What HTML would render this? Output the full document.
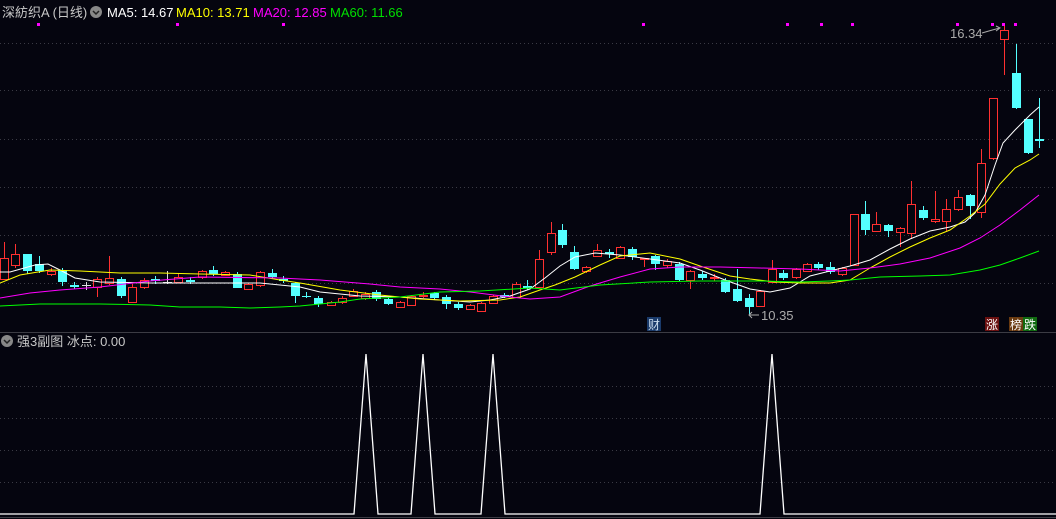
<!DOCTYPE html>
<html><head><meta charset="utf-8"><style>
body{margin:0;background:#05050f;width:1056px;height:519px;overflow:hidden;font-family:"Liberation Sans","Noto Sans CJK SC",sans-serif}
svg{position:absolute;left:0;top:0}
</style></head><body>
<svg id="s" width="1056" height="519" xmlns="http://www.w3.org/2000/svg">
<rect width="1056" height="519" fill="#05050f"/>
<g stroke="#3a3a44" stroke-dasharray="1 3" stroke-width="1">
<line x1="0" y1="43.5" x2="1056" y2="43.5"/><line x1="0" y1="90.5" x2="1056" y2="90.5"/>
<line x1="0" y1="139.5" x2="1056" y2="139.5"/><line x1="0" y1="187.5" x2="1056" y2="187.5"/>
<line x1="0" y1="235.5" x2="1056" y2="235.5"/><line x1="0" y1="283.5" x2="1056" y2="283.5"/>
<line x1="0" y1="386.5" x2="1056" y2="386.5"/><line x1="0" y1="418.5" x2="1056" y2="418.5"/>
<line x1="0" y1="450.5" x2="1056" y2="450.5"/><line x1="0" y1="482.5" x2="1056" y2="482.5"/>
</g>
<line x1="0" y1="332.5" x2="1056" y2="332.5" stroke="#3c3c44"/>
<line x1="0" y1="517.5" x2="1056" y2="517.5" stroke="#3c3c44"/>
<g id="c"></g>
<g fill="none" stroke-width="1">
<polyline stroke="#ffffff" points="0,272 10,272 35,265 48,264 60,270 75,278 100,282 150,283 200,283 260,283 300,287 320,292 360,296 400,297 440,300 470,302 490,300 510,296 530,289 545,278 560,266 575,257 595,253 620,255 650,259 680,263 700,270 725,280 750,289 770,292 790,288 810,276 830,271 850,266 870,260 890,249 910,239 930,231 950,227 965,222 975,213 985,195 995,165 1003,143 1015,130 1030,115 1039,107"/>
<polyline stroke="#ffff00" points="0,283 20,275 50,270 80,271 120,273 160,273 200,274 250,275 280,280 300,283 340,290 380,295 420,299 460,301 500,300 520,297 540,290 555,285 575,277 600,265 620,256 650,253 680,259 700,266 730,276 750,279 775,282 800,283 830,283 850,280 870,268 890,257 910,247 930,238 950,230 970,216 985,204 1000,184 1015,168 1030,160 1039,154"/>
<polyline stroke="#ff00ff" points="0,298 30,293 60,290 100,287 150,281 200,277 280,278 320,280 370,284 400,287 440,289 470,292 510,297 530,299 560,297 590,286 620,277 650,269 680,267 720,267 760,268 800,269 840,271 870,268 900,264 930,258 960,248 980,238 1000,225 1020,210 1039,195"/>
<polyline stroke="#00ff00" points="0,306 40,304 100,304 150,305 180,307 220,307 250,308 280,307 300,306 340,302 360,299 400,297 440,292 480,291 530,288 560,290 600,285 650,282 700,281 760,281 800,282 830,281 850,280 880,277 920,276 950,275 980,270 1000,265 1020,258 1039,251"/>
</g>
<g fill="#ff00ff"><rect x="37" y="23" width="3" height="3"/><rect x="176" y="23" width="3" height="3"/><rect x="282" y="23" width="3" height="3"/><rect x="642" y="23" width="3" height="3"/><rect x="786" y="23" width="3" height="3"/><rect x="820" y="23" width="3" height="3"/><rect x="851" y="23" width="3" height="3"/><rect x="956" y="23" width="3" height="3"/><rect x="991" y="23" width="3" height="3"/><rect x="1002" y="23" width="3" height="3"/><rect x="1014" y="23" width="3" height="3"/></g>
<polyline fill="none" stroke="#fff" stroke-width="1.3" points="0,514 354,514 366,354 378,514 411,514 423,354 435,514 481,514 493,354 505,514 760,514 772,354 784,514 1056,514"/>
<g font-size="13">
<text x="2" y="17" fill="#c8c8c8">深紡织A (日线)</text>
<circle cx="96" cy="12" r="6" fill="#888"/><path d="M93 11l3 3 3-3" stroke="#222" fill="none" stroke-width="1.5"/>
<text x="107" y="17" fill="#fff">MA5: 14.67</text>
<text x="176" y="17" fill="#ffff00">MA10: 13.71</text>
<text x="253" y="17" fill="#ff00ff">MA20: 12.85</text>
<text x="330" y="17" fill="#00e000">MA60: 11.66</text>
<circle cx="7" cy="341" r="6" fill="#888"/><path d="M4 340l3 3 3-3" stroke="#222" fill="none" stroke-width="1.5"/>
<text x="17" y="346" fill="#c8c8c8">强3副图  冰点: 0.00</text>
<text x="950" y="38" fill="#aaa">16.34</text>
<text x="761" y="320" fill="#aaa">10.35</text>
</g>
<path d="M982 33 Q992 30 1000 28 M996 26l4 2-4 3" stroke="#aaa" fill="none"/>
<path d="M759 315h-10 M752 312l-3 3 3 3" stroke="#aaa" fill="none"/>
<rect x="647" y="317" width="14" height="14" fill="#1a3a6a"/><text x="648" y="329" font-size="12" fill="#cde">财</text>
<rect x="985" y="317" width="14" height="14" fill="#6a1010"/><text x="986" y="329" font-size="12" fill="#fff">涨</text>
<rect x="1009" y="317" width="14" height="14" fill="#6a3a10"/><text x="1010" y="329" font-size="12" fill="#fff">榜</text>
<rect x="1023" y="317" width="14" height="14" fill="#106a10"/><text x="1024" y="329" font-size="12" fill="#fff">跌</text>
</svg>
<script>
var d=[
[4,'r',258,279,242,279],[15,'r',254,265,244,268],[27,'c',254,271,254,274],[39,'c',264,271,256,273],[51,'r',271,274,268,276],[62,'c',270,282,268,286],
[74,'c',285,287,282,289],[86,'w',285,286,282,290],[97,'r',279,287,277,297],[109,'r',278,283,256,285],[121,'c',279,296,277,298],[132,'r',287,302,284,302],
[144,'r',280,287,278,289],[155,'c',279,281,276,284],[167,'w',282,283,271,284],[178,'r',277,282,273,283],[190,'c',280,282,277,284],[202,'r',271,277,270,279],
[213,'c',270,274,266,276],[225,'r',272,275,271,276],[237,'c',274,288,272,288],[248,'r',284,289,283,290],[260,'r',272,285,271,287],[272,'c',273,277,269,279],
[283,'c',279,281,276,283],[295,'c',283,296,282,303],[306,'c',296,297,292,298],[318,'c',298,304,296,307],[331,'r',302,305,301,306],[342,'r',298,302,296,304],
[353,'r',291,296,289,297],[365,'r',294,298,292,300],[376,'c',292,299,290,301],[388,'c',299,304,297,305],[400,'r',302,307,301,308],[411,'r',296,305,295,306],
[423,'r',295,296,292,298],[434,'c',293,298,292,300],[446,'c',297,304,295,309],[458,'c',304,308,302,310],[470,'r',305,309,304,310],[481,'r',303,311,302,312],
[493,'r',296,303,295,304],[504,'c',295,297,293,298],[516,'r',284,297,282,298],
[527,'c',286,288,280,290],[539,'r',259,287,250,288],[551,'r',233,252,222,255],[562,'c',230,245,224,248],[574,'c',252,269,246,270],[586,'r',267,271,266,273],
[597,'r',250,256,244,257],[609,'c',252,254,249,258],[620,'r',247,258,246,259],[632,'c',249,257,247,260],[644,'r',258,259,258,267],[655,'c',256,264,255,270],
[667,'r',261,265,259,268],[679,'c',264,280,262,281],[690,'r',271,280,270,289],[702,'c',274,278,271,280],[714,'r',277,278,274,281],[725,'c',280,292,278,293],
[737,'c',289,301,269,302],[749,'c',298,307,294,315],[760,'r',291,306,290,307],[772,'r',269,282,260,283],[783,'c',273,278,270,280],[796,'r',269,277,268,279],
[807,'r',264,271,263,272],[818,'c',264,268,262,270],[830,'c',267,272,262,274],[842,'r',268,274,267,276],[854,'r',214,265,214,266],[865,'c',214,230,201,235],
[876,'r',224,231,212,232],[888,'c',225,231,224,237],[900,'r',228,232,227,247],[911,'r',204,233,181,239],[923,'c',210,218,206,220],[935,'r',219,221,191,223],
[946,'r',209,221,199,231],[958,'r',197,209,190,211],[970,'c',195,206,194,219],[981,'r',163,212,149,218],[993,'r',98,158,98,160],[1004,'r',30,39,25,75],
[1016,'c',73,108,44,109],[1028,'c',119,153,119,154],[1039,'c',139,141,98,148]];
var s='';
d.forEach(function(a){var x=a[0],t=a[1],o=a[2],c=a[3],h=a[4],l=a[5];
var col=t=='r'?'#ff3030':(t=='c'?'#54ffff':'#e0e0e0');
s+='<line x1="'+(x+.5)+'" y1="'+h+'" x2="'+(x+.5)+'" y2="'+l+'" stroke="'+col+'"/>';
var hh=Math.max(1,c-o);
if(t=='r')s+='<rect x="'+(x-3.5)+'" y="'+(o+.5)+'" width="8" height="'+hh+'" fill="#05050f" stroke="'+col+'"/>';
else s+='<rect x="'+(x-4)+'" y="'+o+'" width="9" height="'+hh+'" fill="'+col+'"/>';});
document.getElementById('c').innerHTML=s;
</script>
</body></html>
